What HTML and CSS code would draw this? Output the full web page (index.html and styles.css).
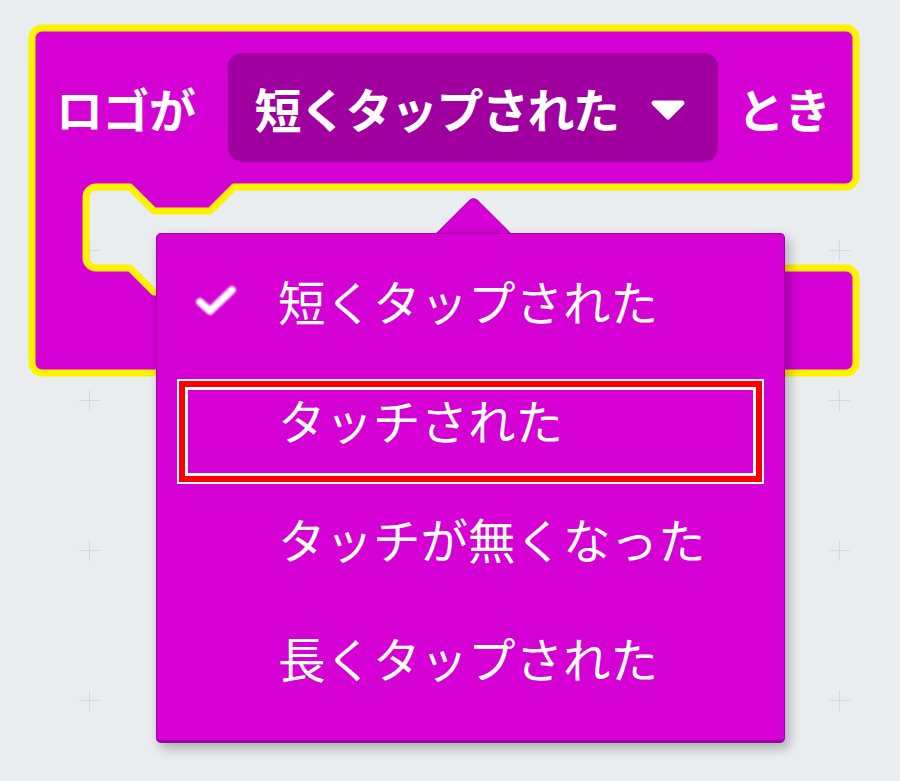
FILE: index.html
```html
<!DOCTYPE html>
<html lang="ja">
<head>
    <meta charset="UTF-8">
    <meta name="viewport" content="width=device-width, initial-scale=1.0">
    <title>ロゴが短くタップされたとき</title>
    <link rel="stylesheet" href="styles.css">
</head>
<body>
    <div class="workspace">
        <svg class="grid" width="900" height="781">
            <defs>
                <pattern id="plus" x="14" y="25" width="150" height="150" patternUnits="userSpaceOnUse">
                    <path d="M65 75.5h21M75.5 65v21" stroke="#d5dadd" stroke-width="1" fill="none"/>
                </pattern>
            </defs>
            <rect width="900" height="781" fill="url(#plus)"/>
        </svg>

        <!-- selected event block -->
        <div class="block">
            <svg class="block-shape" width="832" height="354" viewBox="0 0 832 354">
                <path d="M4 14 A10 10 0 0 1 14 4 H818 A10 10 0 0 1 828 14 V153 A10 10 0 0 1 818 163
                         H206 L182 187 H126 L102 163 H68 A10 10 0 0 0 58 173 V234 A10 10 0 0 0 68 244
                         H102 L126 268 H182 L206 244 H818 A10 10 0 0 1 828 254 V339 A10 10 0 0 1 818 349
                         H14 A10 10 0 0 1 4 339 Z"
                      fill="#d400d4" stroke="#fff200" stroke-width="7" stroke-linejoin="round"/>
            </svg>
            <div class="block-head">
                <span class="label">ロゴが</span>
                <div class="field">
                    <span class="field-text">短くタップされた</span>
                    <svg class="field-arrow" width="36" height="22" viewBox="0 0 36 22">
                        <path d="M4 4 H32 L18 18 Z" fill="#fff" stroke="#fff" stroke-width="5" stroke-linejoin="round"/>
                    </svg>
                </div>
                <span class="label label-end">とき</span>
            </div>
        </div>

        <!-- dropdown menu for the field -->
        <div class="dropdown">
            <div class="dropdown-arrow"></div>
            <ul class="menu">
                <li class="item">
                    <span class="tick">
                        <svg width="46" height="38" viewBox="0 0 46 38">
                            <path d="M7 20 L17 29 L39 8" fill="none" stroke="#fff" stroke-width="7.5" stroke-linecap="round" stroke-linejoin="round"/>
                        </svg>
                    </span>
                    <span>短くタップされた</span>
                </li>
                <li class="item highlight">
                    <span class="tick"></span>
                    <span>タッチされた</span>
                </li>
                <li class="item">
                    <span class="tick"></span>
                    <span>タッチが無くなった</span>
                </li>
                <li class="item">
                    <span class="tick"></span>
                    <span>長くタップされた</span>
                </li>
            </ul>
        </div>
    </div>
</body>
</html>
```

FILE: styles.css
```css
body {
    margin: 0;
    background: #e9edf0;
    font-family: "Noto Sans CJK JP", "Noto Sans", sans-serif;
    color: #fff;
}
.workspace {
    position: relative;
    width: 900px;
    height: 781px;
    overflow: hidden;
    background: #e9edf0;
}
.grid {
    position: absolute;
    left: 0;
    top: 0;
}

/* block sits on the canvas at its own spot */
.block {
    position: absolute;
    left: 28px;
    top: 24px;
    width: 832px;
    height: 354px;
}
.block-shape {
    position: absolute;
    left: 0;
    top: 0;
    overflow: visible;
}
.block-head {
    position: relative;
    display: flex;
    align-items: center;
    height: 167px;
    padding-left: 28px;
    gap: 32px;
    font-size: 47px;
    font-weight: 700;
    line-height: 1;
}
.label {
    letter-spacing: -0.5px;
}
.label-end {
    margin-left: -12px;
}
.field {
    display: flex;
    align-items: center;
    height: 109px;
    padding: 0 32px 0 27px;
    border-radius: 14px;
    background: #a000a0;
}
.field-text {
    letter-spacing: -1.5px;
}
.field-arrow {
    margin-left: 31px;
    margin-top: 4px;
}

/* dropdown */
.dropdown {
    position: absolute;
    left: 156px;
    top: 233px;
    width: 629px;
    height: 510px;
}
.dropdown-arrow {
    position: absolute;
    left: 287px;
    top: -25px;
    width: 60px;
    height: 60px;
    background: #d400d4;
    border-top: 1px solid #b000b0;
    border-left: 1px solid #b000b0;
    border-top-left-radius: 7px;
    transform: rotate(45deg);
    box-shadow: -1px -1px 2px rgba(255, 255, 255, 0.6);
}
.menu {
    position: relative;
    list-style: none;
    margin: 0;
    height: 100%;
    box-sizing: border-box;
    padding: 26px 20px 0 20px;
    background: #d400d4;
    border: 1px solid #a800a8;
    border-bottom: 3px solid #a000a0;
    border-radius: 5px;
    box-shadow: 4px 5px 12px rgba(0, 0, 0, 0.28);
    font-size: 47.5px;
    font-weight: 400;
    line-height: 1;
}
.item {
    display: flex;
    align-items: center;
    height: 105px;
    margin-bottom: 14px;
    padding-bottom: 24px;
    box-sizing: border-box;
    border: 2px solid transparent;
}
.item.highlight {
    border-color: #fff;
    box-shadow: inset 0 0 0 6px #ff0000, inset 0 0 0 9px #fff;
}
.tick {
    display: flex;
    align-items: center;
    width: 99px;
    padding-left: 14px;
    box-sizing: border-box;
}
.tick svg {
    filter: blur(1px);
}
```
